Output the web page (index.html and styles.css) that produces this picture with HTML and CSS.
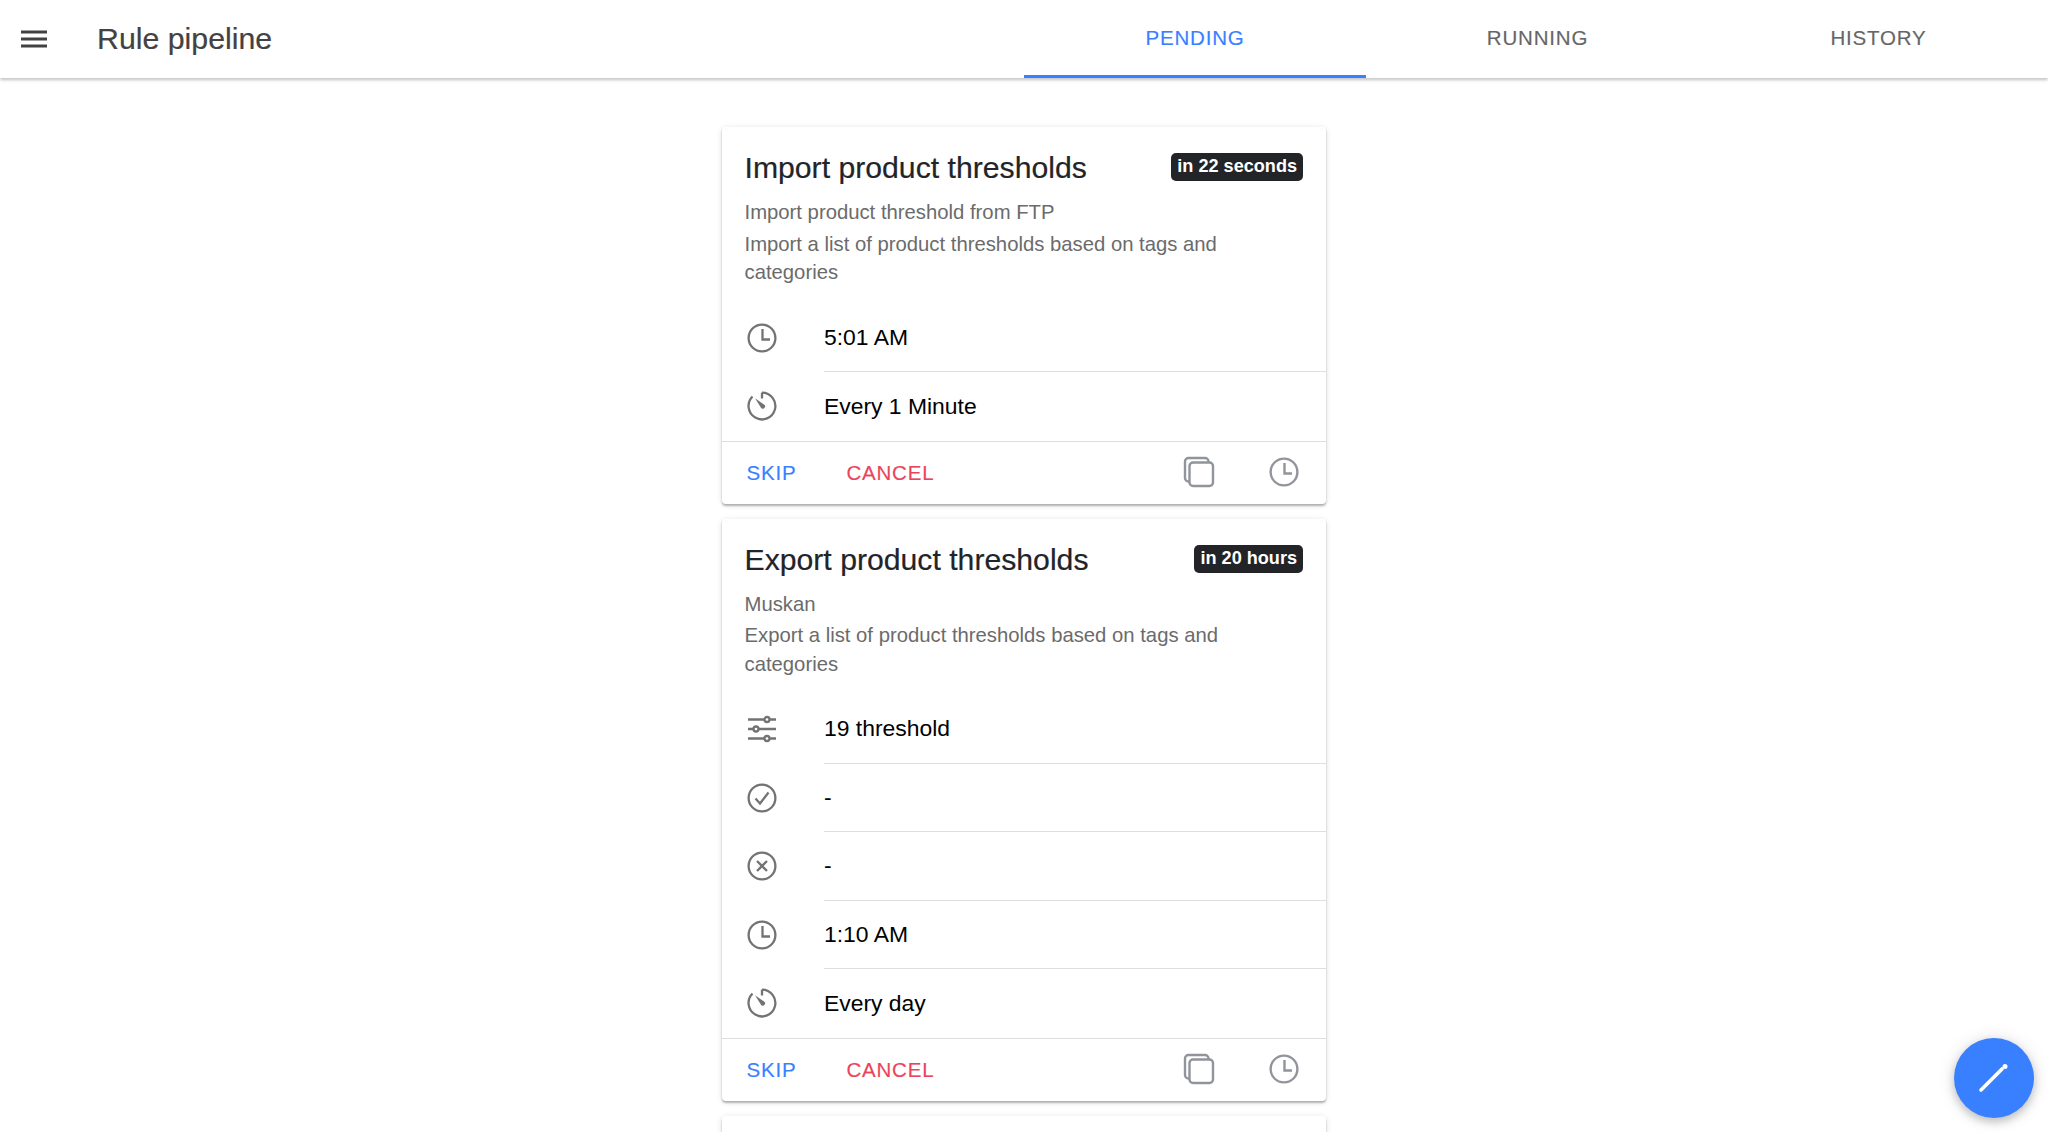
FILE: index.html
```html
<!DOCTYPE html>
<html lang="en">
<head>
<meta charset="utf-8">
<title>Rule pipeline</title>
<link rel="stylesheet" href="styles.css">
</head>
<body>
<svg class="sprite" width="0" height="0" aria-hidden="true">
  <symbol id="i-clock" viewBox="0 0 30 30"><circle cx="15" cy="15" r="13.4"/><path d="M15.500 6V16.500H23"/></symbol>
  <symbol id="i-timer" viewBox="0 0 30 30"><path d="M15 1.600A13.400 13.400 0 1 1 5.500 5.500"/><path d="M15 1.600V7.500"/><path class="solid" d="M8 7.200l9 6.200a2.300 2.300 0 1 1-3.200 3.200z"/></symbol>
  <symbol id="i-sliders" viewBox="0 0 30 30"><path d="M1 5.500H17.500M22.500 5.500H29M1 15H6.500M11.500 15H29M1 24.500H17.500M22.500 24.500H29"/><circle cx="20" cy="5.500" r="2.500"/><circle cx="9" cy="15" r="2.500"/><circle cx="20" cy="24.500" r="2.500"/></symbol>
  <symbol id="i-check" viewBox="0 0 30 30"><circle cx="15" cy="15" r="13.400"/><path d="M8.500 15.500l4.500 5L21.500 9.500"/></symbol>
  <symbol id="i-close" viewBox="0 0 30 30"><circle cx="15" cy="15" r="13.400"/><path d="M10 10l10 10M20 10L10 20"/></symbol>
  <symbol id="i-copy" viewBox="0 0 32 32"><path d="M6 25.500h-.5A3.500 3.500 0 0 1 2 22V5.500A3.500 3.500 0 0 1 5.500 2H22a3.500 3.500 0 0 1 3.500 3.500V6"/><rect x="6.500" y="6.500" width="23.500" height="23.500" rx="3.500"/></symbol>
</svg>

<header class="toolbar">
  <div class="brand">
    <svg class="menu" viewBox="0 0 26 18" aria-hidden="true"><path d="M0 2h26M0 9h26M0 16h26"/></svg>
    <h1 class="page-title">Rule pipeline</h1>
  </div>
  <nav class="tabs">
    <a class="tab tab-active">PENDING</a>
    <a class="tab">RUNNING</a>
    <a class="tab">HISTORY</a>
  </nav>
</header>

<main class="content">
  <article class="card">
    <div class="card-head">
      <div class="title-row">
        <h2 class="card-title">Import product thresholds</h2>
        <span class="badge">in 22 seconds</span>
      </div>
      <p class="subtitle">Import product threshold from FTP</p>
      <p class="desc">Import a list of product thresholds based on tags and categories</p>
    </div>
    <ul class="rows">
      <li class="row"><svg class="row-icon"><use href="#i-clock"/></svg><span class="row-text">5:01 AM</span></li>
      <li class="row"><svg class="row-icon"><use href="#i-timer"/></svg><span class="row-text">Every 1 Minute</span></li>
    </ul>
    <footer class="actions">
      <button class="btn btn-skip">SKIP</button>
      <button class="btn btn-cancel">CANCEL</button>
      <span class="spacer"></span>
      <svg class="act-icon copy"><use href="#i-copy"/></svg>
      <svg class="act-icon"><use href="#i-clock"/></svg>
    </footer>
  </article>

  <article class="card">
    <div class="card-head">
      <div class="title-row">
        <h2 class="card-title">Export product thresholds</h2>
        <span class="badge">in 20 hours</span>
      </div>
      <p class="subtitle">Muskan</p>
      <p class="desc">Export a list of product thresholds based on tags and categories</p>
    </div>
    <ul class="rows">
      <li class="row"><svg class="row-icon"><use href="#i-sliders"/></svg><span class="row-text">19 threshold</span></li>
      <li class="row"><svg class="row-icon"><use href="#i-check"/></svg><span class="row-text">-</span></li>
      <li class="row"><svg class="row-icon"><use href="#i-close"/></svg><span class="row-text">-</span></li>
      <li class="row"><svg class="row-icon"><use href="#i-clock"/></svg><span class="row-text">1:10 AM</span></li>
      <li class="row"><svg class="row-icon"><use href="#i-timer"/></svg><span class="row-text">Every day</span></li>
    </ul>
    <footer class="actions">
      <button class="btn btn-skip">SKIP</button>
      <button class="btn btn-cancel">CANCEL</button>
      <span class="spacer"></span>
      <svg class="act-icon copy"><use href="#i-copy"/></svg>
      <svg class="act-icon"><use href="#i-clock"/></svg>
    </footer>
  </article>

  <article class="card card-empty"></article>
</main>

<button class="fab" aria-label="Edit">
  <svg viewBox="0 0 32 32" aria-hidden="true"><path class="fab-line" d="M3 28L24 7"/><path class="fab-tip" d="M27 4.500h.01"/></svg>
</button>
</body>
</html>
```
FILE: styles.css
```css
* { box-sizing: border-box; }
html, body { margin: 0; height: 100%; }
body {
  display: flex;
  flex-direction: column;
  overflow: hidden;
  background: #fff;
  font-family: "Liberation Sans", Arial, sans-serif;
  color: #000;
}
.sprite { position: absolute; }
symbol { overflow: visible; }

.toolbar {
  flex: none;
  height: 78px;
  display: flex;
  background: #fff;
  box-shadow: 0 2px 3px rgba(0, 0, 0, .24);
  position: relative;
  z-index: 2;
}
.brand { width: 1024px; display: flex; align-items: center; padding-left: 21px; }
.menu { width: 26px; height: 18px; margin-right: 50px; fill: none; stroke: #424242; stroke-width: 3; }
.page-title { margin: 0; font-size: 30.300px; font-weight: 400; color: #424242; -webkit-text-stroke: .2px #424242; }
.tabs { width: 1024px; display: grid; grid-template-columns: 342px 343px 1fr; }
.tab {
  display: flex;
  align-items: center;
  justify-content: center;
  padding-top: 1px;
  font-size: 20.500px;
  letter-spacing: .8px;
  color: #666;
  border-bottom: 3px solid transparent;
  -webkit-text-stroke: .15px currentColor;
}
.tab-active { color: #3880ff; border-bottom-color: #3880ff; }

.content {
  flex: 1;
  min-height: 0;
  overflow: hidden;
  padding-top: 49px;
  display: flex;
  flex-direction: column;
  align-items: center;
  gap: 15px;
}
.card {
  flex: none;
  width: 604px;
  background: #fff;
  border-radius: 4px;
  box-shadow: 0 2px 2px rgba(0, 0, 0, .26), 0 1px 6px rgba(0, 0, 0, .12);
}
.card-empty { height: 200px; }
.card-head { padding: 23px 23px 17px 22.500px; }
.title-row { display: flex; justify-content: space-between; align-items: flex-start; }
.card-title { margin: 0; font-size: 30.200px; line-height: 36px; font-weight: 400; color: #222428; -webkit-text-stroke: .2px #222428; }
.badge {
  margin-top: 3px;
  padding: 0 6px;
  height: 28px;
  line-height: 27px;
  font-size: 18.100px;
  font-weight: 700;
  color: #fff;
  background: #222428;
  border-radius: 5px;
  white-space: nowrap;
}
.subtitle, .desc { margin: 0; font-size: 20.300px; line-height: 28.500px; color: #6b6b6b; }
.subtitle { margin-top: 12px; margin-bottom: 3px; }
.desc { padding-right: 40px; }

.rows { list-style: none; margin: 0; padding: 0; }
.row { display: flex; align-items: center; height: 68.500px; }
.row-icon {
  flex: none;
  width: 30px;
  height: 30px;
  margin: 0 47px 0 25px;
  fill: none;
  stroke: #737373;
  stroke-width: 2.300;
}
.solid { fill: #737373; stroke: none; }
.row-text {
  flex: 1;
  align-self: stretch;
  display: flex;
  align-items: center;
  font-size: 22.900px;
  border-bottom: 1.500px solid #dedede;
}
.row:last-child .row-text { border-bottom: 0; }

.actions {
  height: 63px;
  display: flex;
  align-items: center;
  border-top: 1.500px solid #dedede;
  padding-right: 27px;
}
.btn {
  border: 0;
  background: none;
  padding: 0;
  font: inherit;
  font-size: 20.500px;
  letter-spacing: .8px;
  -webkit-text-stroke: .15px currentColor;
}
.btn-skip { color: #3880ff; margin-left: 24.500px; margin-right: 50px; }
.btn-cancel { color: #eb445a; }
.spacer { flex: 1; }
.act-icon {
  width: 30px;
  height: 30px;
  margin-top: -1px;
  fill: none;
  stroke: #92949c;
  stroke-width: 2.400;
}
.copy { width: 32px; height: 32px; margin-right: 54.500px; }

.fab {
  position: absolute;
  left: 1954px;
  top: 1038px;
  width: 80px;
  height: 80px;
  padding: 0;
  border: 0;
  border-radius: 50%;
  background: #3880ff;
  box-shadow: 0 4px 8px rgba(0, 0, 0, .2), 0 1px 18px rgba(0, 0, 0, .12);
  display: flex;
  align-items: center;
  justify-content: center;
  z-index: 3;
}
.fab svg { width: 32px; height: 32px; fill: none; stroke: #fff; stroke-linecap: round; }
.fab-line { stroke-width: 3.600; }
.fab-tip { stroke-width: 5; }
```
